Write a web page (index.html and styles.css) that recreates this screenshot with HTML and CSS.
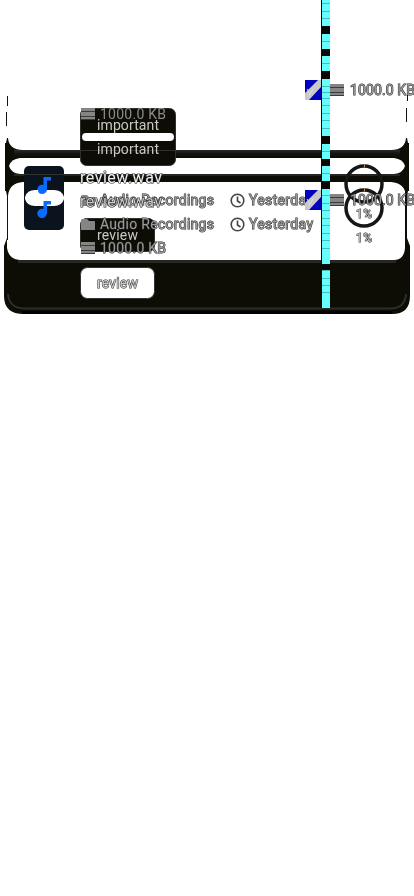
FILE: index.html
```html
<!DOCTYPE html>
<html lang="en"><head><meta charset="utf-8"><title>Audio Recordings</title><link rel="stylesheet" href="styles.css"></head>
<body><main class="canvas">
<svg class="art" viewBox="0 0 414 896" width="414" height="896">
<defs>
<linearGradient id="bar" gradientUnits="userSpaceOnUse" x1="0" y1="150" x2="0" y2="158"><stop offset="0" stop-color="#2b2b27"/><stop offset=".4" stop-color="#151511"/><stop offset="1" stop-color="#0b0b06"/></linearGradient>
<g id="stack" fill="#858585"><path d="M0 0h14v12H0z"/><path d="M0 3.500h14M0 8.500h14M0 11.500h14" stroke="#3b3b3b"/></g>
<g id="folder"><path d="M1 0h5l2 2h5q1 0 1 1v8H0V1z" fill="#858585"/></g>
<g id="clock" fill="none" stroke="#444" stroke-width="1.6"><circle cx="7.500" cy="7.500" r="6.300"/><path d="M7.500 3.500v4.500l3 2"/></g>
<g id="note"><circle cx="5" cy="13.500" r="4.700" fill="#0a6cff"/><path d="M6.500 14V1H14v3.500h-4V14z" fill="#0a6cff"/></g>
<g id="badge"><path d="M0 0h16v20H0z" fill="#c8c8c8"/><path d="M0 0h13L0 13zM16 7v13H4z" fill="#0000bd"/><path d="M2 9l3 5m3-5l-5 8" stroke="#dedede" fill="none"/></g>
</defs>
<path class="ink" d="M7 138h1q1 12 15 12H391q14 0 15-12h1l1 5h1v48h-1l-1 5h-1q-1-13-15-14H23q-14 1-15 14H7l-1-5H5v-48h1z"/>
<path fill="#fff" d="M20 158H394q9 1 11 8-2 7-11 8H20q-9-1-11-8 2-7 11-8z"/>
<path fill="url(#bar)" d="M14 150H400v8H14z"/><path class="ink" d="M14 174H400v8H14z"/><path d="M14 175h386" stroke="#252522" stroke-width="2"/>
<path class="ink" d="M4 246l3-8v10q2 12 14 12H394q10 0 11-12V190h2v48l3 8v50q0 18-18 18H24Q4 314 4 296z"/>
<path fill="#262622" d="M18 260H396v3H18z"/>
<path d="M8 294q1 14 16 14.500H390q15 0 16-14.500" fill="none" stroke="#2d2d2a" stroke-width="2"/>
<path d="M22 312.500H392" stroke="#000" stroke-width="3"/>
<path d="M7.500 96v10M6.500 112v14M7.500 194v46M407.500 92v9M406.500 108v14" stroke="#111"/>
<rect class="tag" x="80.500" y="108.500" width="95" height="57" rx="6"/><rect x="82" y="133" width="92" height="8" rx="4" fill="#fff"/><path d="M81 150.500h94" stroke="#30302d"/>
<rect class="tag" x="80.500" y="218.500" width="74" height="33" rx="6"/><rect x="80.500" y="267.500" width="74" height="31" rx="7" fill="#fff" stroke="#333"/>
<rect x="24" y="166" width="40" height="64" rx="5" fill="#0b141e"/><path d="M24 174.500h40" stroke="#30302d"/>
<use href="#note" x="37" y="176"/><path d="M25 197q2-7 10-7h19q8 0 10 7v2q-2 7-10 7H35q-8 0-10-7z" fill="#fff"/><path d="M38 190h9q-1 4-5 4t-4-4z" fill="#0a6cff"/><use href="#note" x="37" y="200"/>
<g fill="none" stroke="#161616" stroke-width="3.500"><circle cx="364" cy="184" r="18"/><circle cx="364" cy="208" r="18"/></g>
<path d="M364.500 164.500v3M364.500 188.500v3" stroke="#bd8650"/>
<use href="#folder" x="81" y="195"/><use href="#folder" x="81" y="219"/><use href="#clock" x="230" y="193"/><use href="#clock" x="230" y="217"/>
<use href="#stack" x="81" y="108"/><use href="#stack" x="81" y="242"/><use href="#stack" x="330" y="84"/><use href="#stack" x="330" y="194"/>
<g class="copy">
<text class="dim" x="100" y="119" textLength="66">1000.0 KB</text><text class="light" x="97" y="130" textLength="62">important</text><text class="light" x="97" y="154" textLength="62">important</text>
<text class="title" x="80" y="183" textLength="82">review.wav</text><text class="fringe" x="100" y="205" textLength="114">Audio Recordings</text><text class="title mixed" x="80" y="207" textLength="82">review.wav</text>
<text class="fringe" x="100" y="229" textLength="114">Audio Recordings</text>
<text class="fringe" x="249" y="205" textLength="64">Yesterday</text><text class="fringe" x="249" y="229" textLength="64">Yesterday</text>
<text class="light" x="97" y="240" textLength="41">review</text><text class="fringe" x="100" y="253" textLength="66">1000.0 KB</text><text class="fringe pale" x="97" y="288" textLength="41">review</text>
<text class="fringe" x="350" y="95" textLength="65">1000.0 KB</text><text class="fringe" x="350" y="205" textLength="65">1000.0 KB</text>
<text class="fringe pale pct" x="356" y="218" textLength="16">1%</text><text class="fringe pale pct" x="356" y="242" textLength="16">1%</text>
</g>
<use href="#badge" x="305" y="80"/><use href="#badge" x="305" y="190"/>
<path d="M321 0h9v308h-9z" fill="#080805"/>
<path d="M322 0h8v26h-8zM322 34h8v15h-8zM322 56h8v15h-8zM322 79h8v57h-8zM322 144h8v15h-8zM322 166h8v15h-8zM322 189h8v75h-8zM322 271h8v37h-8z" fill="#66ffff"/>
<path d="M322 3.500h8m-8 8h8m-8 7h8m-8 23h8m-8 22h8m-8 23h8m-8 6h8m-8 6h8m-8 7h8m-8 8h8m-8 7h8m-8 8h8m-8 23h8m-8 22h8m-8 22h8m-8 8h8m-8 7h8m-8 8h8m-8 7h8m-8 8h8m-8 7h8m-8 8h8m-8 22h8m-8 8h8m-8 7h8m-8 7h8" stroke="#48bcbc"/>
</svg></main></body></html>
```
FILE: styles.css
```css
body{margin:0;background:#fff;font-family:Roboto,sans-serif}
.canvas{width:414px;height:896px;overflow:hidden}
.art{display:block;will-change:transform}
.ink{fill:#0d0d06}
.tag{fill:#0d0d06;stroke:#30302d}
.copy{font-size:14px}
.dim{fill:#8b8b8b}
.light{fill:#c9c9c6}
.title{font-size:16px;fill:#eee;stroke:#222;stroke-width:1.2px;paint-order:stroke}
.mixed{fill:#ccc}
.fringe{fill:#999;stroke:#2a2a2a;stroke-width:1px;paint-order:stroke}
.pale{fill:#ccc}
.pct{font-size:12px}
```
